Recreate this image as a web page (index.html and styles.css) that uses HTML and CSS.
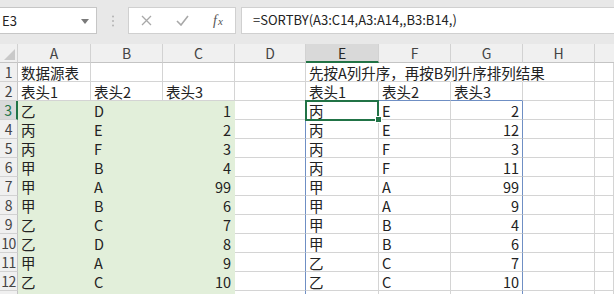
FILE: index.html
```html
<!DOCTYPE html>
<html lang="zh-CN">
<head>
<meta charset="utf-8">
<link rel="stylesheet" href="styles.css">
</head>
<body>
<div class="toolbar">
  <div class="namebox">
    <span class="nb-text">E3</span>
    <svg class="nb-arrow" width="8" height="5" viewBox="0 0 8 5"><path d="M0 0 L8 0 L4 5 Z" fill="#7a7a7a"/></svg>
  </div>
  <div class="dots">
    <svg width="4" height="12" viewBox="0 0 4 12"><circle cx="2" cy="1.5" r="1" fill="#b4b4b4"/><circle cx="2" cy="6" r="1" fill="#b4b4b4"/><circle cx="2" cy="10.5" r="1" fill="#b4b4b4"/></svg>
  </div>
  <div class="fxbox">
    <svg class="ic-x" width="11" height="11" viewBox="0 0 11 11"><path d="M1 1 L10 10 M10 1 L1 10" stroke="#a8a8a8" stroke-width="1.3" fill="none"/></svg>
    <svg class="ic-ok" width="13" height="11" viewBox="0 0 13 11"><path d="M1 6 L5 10 L12 1" stroke="#a8a8a8" stroke-width="1.6" fill="none"/></svg>
    <span class="ic-fx"><i>f</i><i class="x">x</i></span>
  </div>
  <div class="formula">=SORTBY(A3:C14,A3:A14,,B3:B14,)</div>
</div>

<div class="sheet">
  <!-- header -->
  <div class="corner"><svg width="11" height="11" viewBox="0 0 11 11"><path d="M11 0 L11 11 L0 11 Z" fill="#c9c9c9"/></svg></div>
  <div class="ch">A</div><div class="ch">B</div><div class="ch">C</div><div class="ch">D</div>
  <div class="ch sel">E</div><div class="ch">F</div><div class="ch">G</div><div class="ch">H</div><div class="ch last"></div>

  <!-- row 1 -->
  <div class="rh">1</div>
  <div class="c">数据源表</div><div class="c"></div><div class="c"></div><div class="c"></div>
  <div class="c ov nr">先按A列升序，再按B列升序排列结果</div><div class="c nr"></div><div class="c nr"></div><div class="c"></div><div class="c"></div>

  <!-- row 2 -->
  <div class="rh">2</div>
  <div class="c">表头1</div><div class="c">表头2</div><div class="c">表头3</div><div class="c"></div>
  <div class="c sb">表头1</div><div class="c sb">表头2</div><div class="c sb">表头3</div><div class="c"></div><div class="c"></div>

  <!-- row 3 -->
  <div class="rh rsel">3</div>
  <div class="c g">乙</div><div class="c g">D</div><div class="c g n">1</div><div class="c sl"></div>
  <div class="c active">丙</div><div class="c">E</div><div class="c n sr">2</div><div class="c"></div><div class="c"></div>

  <!-- row 4 -->
  <div class="rh">4</div>
  <div class="c g">丙</div><div class="c g">E</div><div class="c g n">2</div><div class="c sl"></div>
  <div class="c">丙</div><div class="c">E</div><div class="c n sr">12</div><div class="c"></div><div class="c"></div>

  <!-- row 5 -->
  <div class="rh">5</div>
  <div class="c g">丙</div><div class="c g">F</div><div class="c g n">3</div><div class="c sl"></div>
  <div class="c">丙</div><div class="c">F</div><div class="c n sr">3</div><div class="c"></div><div class="c"></div>

  <!-- row 6 -->
  <div class="rh">6</div>
  <div class="c g">甲</div><div class="c g">B</div><div class="c g n">4</div><div class="c sl"></div>
  <div class="c">丙</div><div class="c">F</div><div class="c n sr">11</div><div class="c"></div><div class="c"></div>

  <!-- row 7 -->
  <div class="rh">7</div>
  <div class="c g">甲</div><div class="c g">A</div><div class="c g n">99</div><div class="c sl"></div>
  <div class="c">甲</div><div class="c">A</div><div class="c n sr">99</div><div class="c"></div><div class="c"></div>

  <!-- row 8 -->
  <div class="rh">8</div>
  <div class="c g">甲</div><div class="c g">B</div><div class="c g n">6</div><div class="c sl"></div>
  <div class="c">甲</div><div class="c">A</div><div class="c n sr">9</div><div class="c"></div><div class="c"></div>

  <!-- row 9 -->
  <div class="rh">9</div>
  <div class="c g">乙</div><div class="c g">C</div><div class="c g n">7</div><div class="c sl"></div>
  <div class="c">甲</div><div class="c">B</div><div class="c n sr">4</div><div class="c"></div><div class="c"></div>

  <!-- row 10 -->
  <div class="rh">10</div>
  <div class="c g">乙</div><div class="c g">D</div><div class="c g n">8</div><div class="c sl"></div>
  <div class="c">甲</div><div class="c">B</div><div class="c n sr">6</div><div class="c"></div><div class="c"></div>

  <!-- row 11 -->
  <div class="rh">11</div>
  <div class="c g">甲</div><div class="c g">A</div><div class="c g n">9</div><div class="c sl"></div>
  <div class="c">乙</div><div class="c">C</div><div class="c n sr">7</div><div class="c"></div><div class="c"></div>

  <!-- row 12 -->
  <div class="rh">12</div>
  <div class="c g">乙</div><div class="c g">C</div><div class="c g n">10</div><div class="c sl"></div>
  <div class="c">乙</div><div class="c">C</div><div class="c n sr">10</div><div class="c"></div><div class="c"></div>

  <!-- row 13 (only its top edge is visible) -->
  <div class="rh"></div>
  <div class="c g"></div><div class="c g"></div><div class="c g n"></div><div class="c sl"></div>
  <div class="c"></div><div class="c"></div><div class="c n sr"></div><div class="c"></div><div class="c"></div>
</div>
</body>
</html>
```

FILE: styles.css
```css
html, body {
  margin: 0;
  padding: 0;
  width: 614px;
  height: 294px;
  overflow: hidden;
  background: #ffffff;
  font-family: "Noto Sans CJK SC", "Noto Sans", sans-serif;
}

.toolbar {
  height: 44px;
  background: #e8e8e8;
  display: flex;
  align-items: flex-start;
  padding-top: 7px;
  box-sizing: border-box;
}

.namebox {
  width: 97px;
  height: 27px;
  box-sizing: border-box;
  background: #fff;
  border: 1px solid #c6c6c6;
  border-left: none;
  display: flex;
  align-items: center;
  justify-content: space-between;
  padding: 0 7px 0 2px;
}

.nb-text {
  font-size: 13px;
  color: #222;
}

.nb-arrow {
  margin-top: 1px;
}

.dots {
  width: 31px;
  height: 27px;
  display: flex;
  align-items: center;
  justify-content: center;
}

.fxbox {
  width: 108px;
  height: 27px;
  box-sizing: border-box;
  background: #fff;
  border: 1px solid #d0d0d0;
  display: flex;
  align-items: center;
  padding-left: 12px;
}

.ic-x { margin-right: 24px; }
.ic-ok { margin-right: 24px; }

.ic-fx {
  font-family: "Liberation Serif", serif;
  font-size: 14px;
  color: #555;
  display: flex;
  align-items: baseline;
}
.ic-fx .x { font-size: 11px; margin-left: 1px; }

.formula {
  margin-left: 5px;
  flex: 1;
  height: 27px;
  box-sizing: border-box;
  background: #fff;
  border: 1px solid #d0d0d0;
  border-right: none;
  font-size: 13px;
  color: #222;
  padding-left: 11px;
  line-height: 24px;
  white-space: nowrap;
}

.sheet {
  display: grid;
  grid-template-columns: 18px 73px 72px 72px 71px 73px 72px 72px 72px 1fr;
  grid-auto-rows: 19px;
}

.sheet > div {
  box-sizing: border-box;
  min-width: 0;
}

.corner, .ch {
  background: #f0f0f0;
  border-right: 1px solid #d2d2d2;
  border-bottom: 1px solid #c4c4c4;
}

.corner {
  display: flex;
  align-items: flex-end;
  justify-content: flex-end;
  padding: 0 2px 2px 0;
}

.ch {
  font-size: 14px;
  color: #444;
  text-align: center;
  line-height: 19px;
}

.ch.last { border-right: none; }

.ch.sel {
  background: #d9d9d9;
  border-bottom: 2px solid #217346;
  color: #262626;
  line-height: 18px;
}

.rh {
  background: #f0f0f0;
  border-right: 1px solid #c4c4c4;
  border-bottom: 1px solid #d2d2d2;
  font-size: 14px;
  color: #444;
  text-align: center;
  line-height: 19px;
  letter-spacing: -0.5px;
  overflow: hidden;
}

.rh.rsel {
  background: #d9d9d9;
  border-right: 2px solid #217346;
  color: #217346;
}

.c {
  border-right: 1px solid #d4d4d4;
  border-bottom: 1px solid #d4d4d4;
  font-size: 14.5px;
  color: #222;
  padding: 0 3px;
  line-height: 16px;
  display: flex;
  align-items: flex-end;
  white-space: nowrap;
  overflow: hidden;
}

.c.n { justify-content: flex-end; }

.c.ov { overflow: visible; }
.c.nr { border-right-color: transparent; }

.c.g {
  background: #e2efda;
  border-right-color: #e2efda;
  border-bottom-color: #e2efda;
}

.c.sb { border-bottom-color: #6f8fc4; }
.c.sl { border-right-color: #6f8fc4; }
.c.sr { border-right-color: #6f8fc4; }

.c.active {
  position: relative;
  overflow: visible;
}

.c.active::after {
  content: "";
  position: absolute;
  left: -1px;
  top: -1px;
  width: 74px;
  height: 21px;
  box-sizing: border-box;
  border: 2px solid #217346;
}

.c.active::before {
  content: "";
  position: absolute;
  left: 69px;
  top: 15px;
  width: 5px;
  height: 5px;
  background: #217346;
  border: 1px solid #fff;
  z-index: 2;
}
```
